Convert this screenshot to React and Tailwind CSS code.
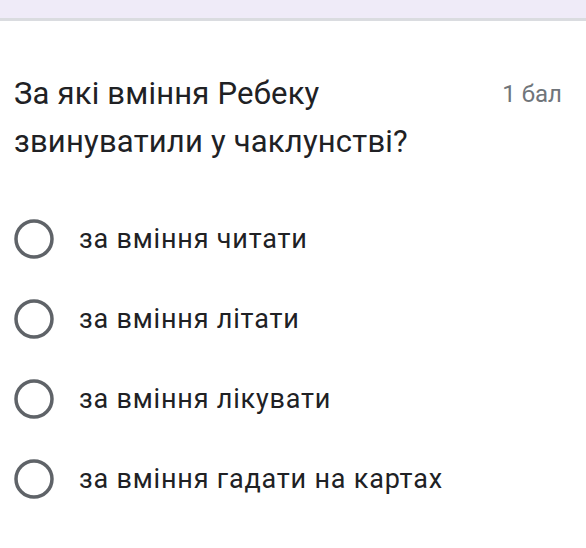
const options = [
  'за вміння читати',
  'за вміння літати',
  'за вміння лікувати',
  'за вміння гадати на картах',
]

function Radio() {
  return (
    <svg width="40" height="40" viewBox="0 0 40 40" className="shrink-0">
      <circle cx="20" cy="20" r="18" fill="none" stroke="#5f6368" strokeWidth="3.5" />
    </svg>
  )
}

export default function App() {
  return (
    <div className="w-[586px] h-[548px] bg-white overflow-hidden font-['Roboto',sans-serif]">
      {/* top band */}
      <div className="h-[21px] bg-[#efebf8] border-b-[3px] border-[#dadce0]" />

      {/* question */}
      <div className="flex items-start pl-[14px] pr-[24px] mt-[49px]">
        <p className="flex-1 max-w-[460px] text-[31px] leading-[48px] tracking-[0.2px] text-[#202124]">
          За які вміння Ребеку звинуватили у чаклунстві?
        </p>
        <span className="ml-auto text-[24px] leading-[48px] text-[#70757a]">1 бал</span>
      </div>

      {/* options */}
      <div className="mt-[33px] flex flex-col">
        {options.map(o => (
          <div key={o} className="flex items-center h-[80px] pl-[14px]">
            <Radio />
            <span className="ml-[25px] text-[27px] tracking-[0.8px] text-[#202124]">{o}</span>
          </div>
        ))}
      </div>
    </div>
  )
}
